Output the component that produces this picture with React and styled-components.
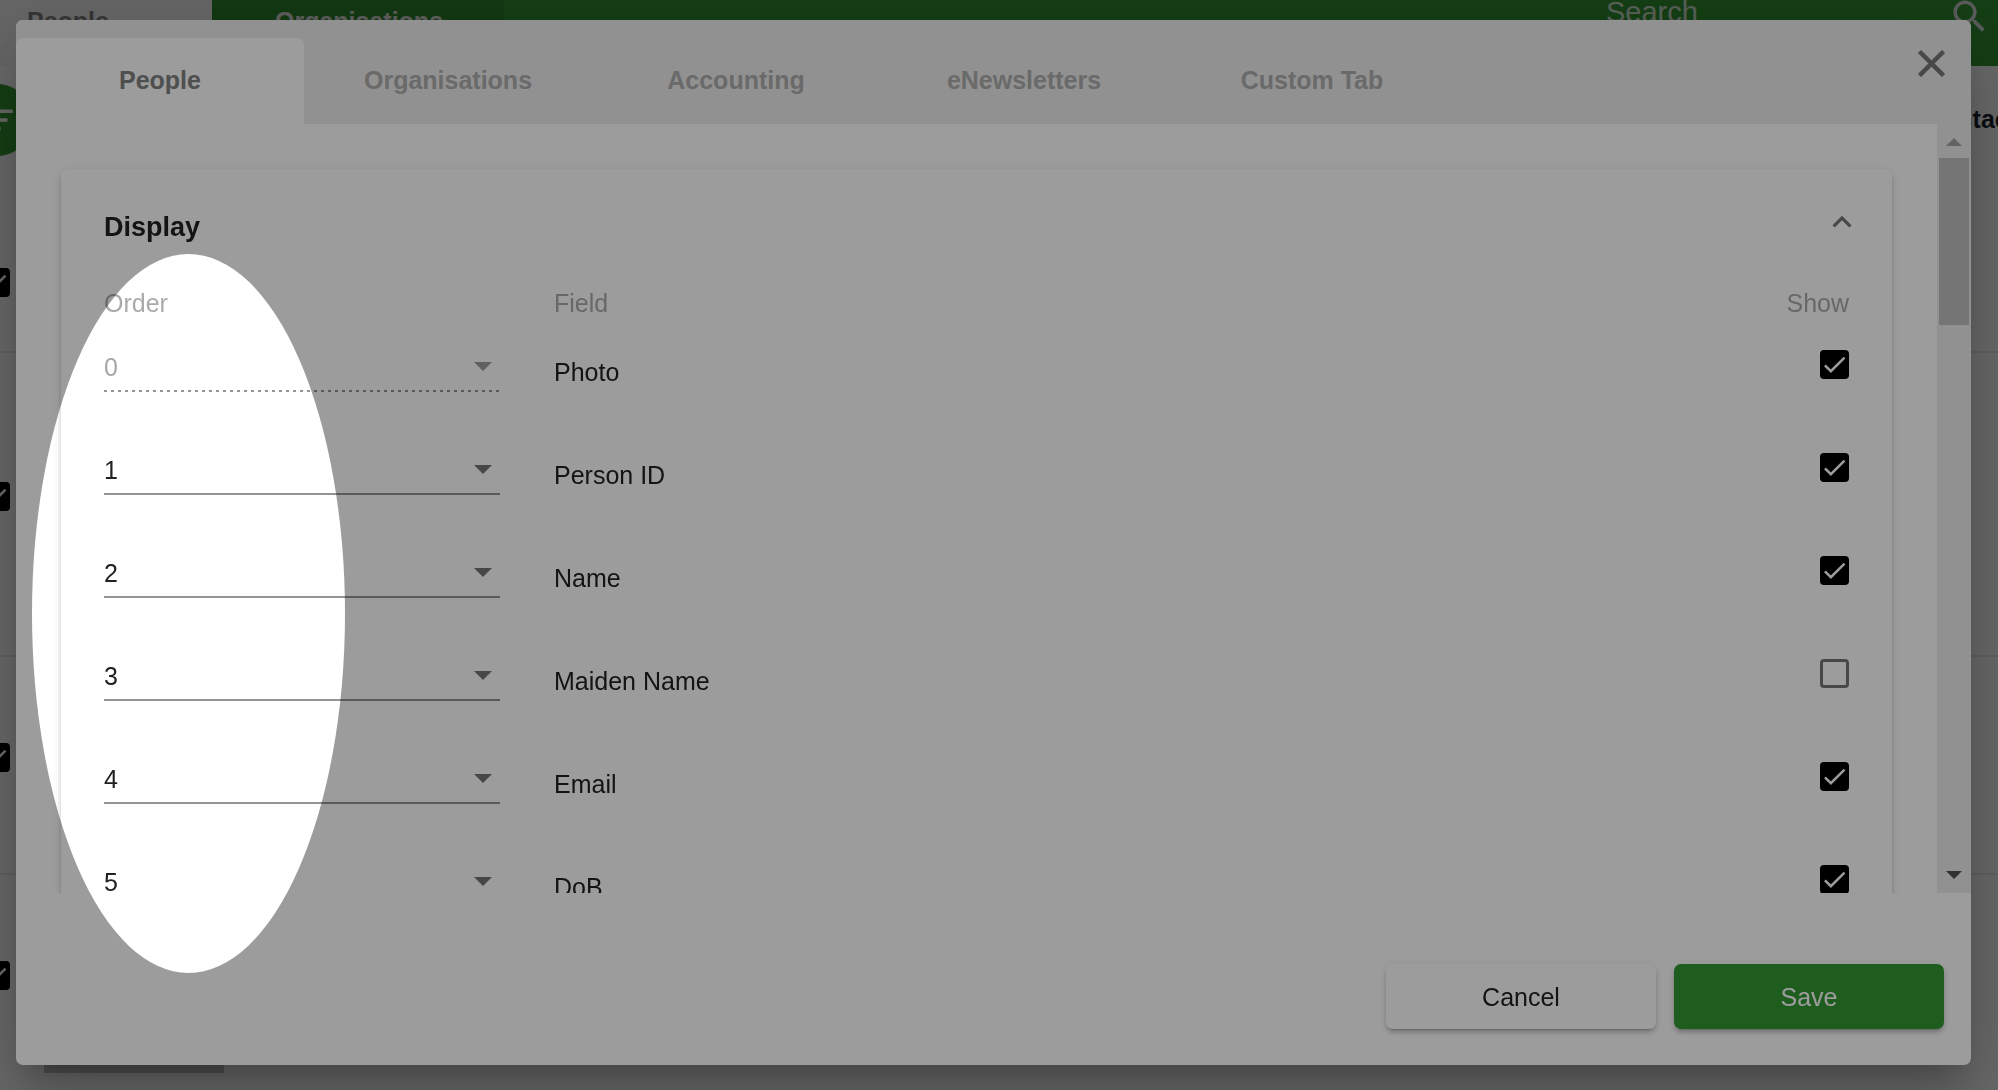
import React, { useState } from 'react';
import styled, { createGlobalStyle } from 'styled-components';

const GlobalStyle = createGlobalStyle`
  * {
    box-sizing: border-box;
  }
  body {
    margin: 0;
    background: #fff;
    color: #212121;
    font-family: "Liberation Sans", Arial, sans-serif;
    font-size: 25px;
    line-height: 30px;
  }
  button, select {
    font: inherit;
    color: inherit;
  }
`;

// ---- page behind the dialog ----

const Page = styled.div`
  height: 100vh;
  overflow: hidden;
`;

const TopBar = styled.header`
  display: flex;
  height: 66px;
  background: #339933;
`;

const TopTab = styled.a`
  width: ${props => props.$first ? '212px' : '292px'};
  padding: 6px 0 0 ${props => props.$first ? '27px' : '2px'};
  text-align: ${props => props.$first ? 'left' : 'center'};
  font-weight: bold;
  text-decoration: none;
  color: ${props => props.$first ? '#828282' : '#e4e4e4'};
  background: ${props => props.$first ? '#f8f8f8' : '#2e8a2e'};
`;

const SearchBox = styled.div`
  display: flex;
  align-items: flex-start;
  margin-left: auto;
  width: 392px;
  height: 38px;
  margin-top: -5px;
`;

const SearchInput = styled.input`
  flex: 1;
  min-width: 0;
  height: 34px;
  padding: 0;
  border: 0;
  background: none;
  font: inherit;
  font-size: 29px;
  color: #fff;
  &::placeholder {
    color: #fff;
    opacity: 0.8;
  }
`;

const SearchIcon = styled.svg`
  flex: none;
  width: 43px;
  height: 43px;
  margin-right: 7px;
  fill: #dcdcdc;
`;

const Toolbar = styled.div`
  display: flex;
  justify-content: space-between;
  align-items: flex-start;
  height: 162px;
  padding-top: 18px;
`;

const FilterButton = styled.button`
  display: grid;
  place-items: center;
  width: 72px;
  height: 72px;
  margin-left: -39px;
  padding: 0;
  border: 0;
  border-radius: 50%;
  background: #339933;
  svg {
    width: 42px;
    height: 42px;
    fill: #fff;
  }
`;

const ColumnTitle = styled.div`
  width: 74px;
  padding-top: 20px;
  font-weight: bold;
  color: #15202b;
  white-space: nowrap;
`;

const PersonRow = styled.div`
  display: flex;
  align-items: center;
  gap: 34px;
  height: ${props => props.$height}px;
  margin-left: -19px;
  border-bottom: 2px solid #ebebeb;
`;

const RowCheck = styled.span`
  padding-bottom: 15px;
`;

const Photo = styled.span`
  width: 180px;
  height: 180px;
  background: #c4c4c4;
`;

// ---- dialog ----

const Backdrop = styled.div`
  position: fixed;
  inset: 0;
  display: flex;
  padding: 20px 27px 25px 16px;
  overflow: hidden;
  background: rgba(0, 0, 0, 0.32);
`;

const Dialog = styled.section`
  flex: 1;
  display: flex;
  flex-direction: column;
  min-width: 0;
  overflow: hidden;
  border-radius: 7px;
  background: #fff;
  box-shadow: 0 20px 27px -13px rgba(0, 0, 0, 0.2),
    0 43px 68px 5px rgba(0, 0, 0, 0.14),
    0 16px 83px 14px rgba(0, 0, 0, 0.12);
`;

const TabStrip = styled.div`
  flex: none;
  display: flex;
  align-items: flex-end;
  height: 104px;
  background: #eee;
`;

const Tab = styled.button`
  width: 288px;
  height: 86px;
  padding: 0 0 2px;
  border: 0;
  border-radius: 8px 8px 0 0;
  font-weight: bold;
  color: ${props => props.$active ? '#828282' : '#adadad'};
  background: ${props => props.$active ? '#fff' : 'transparent'};
`;

const CloseButton = styled.button`
  align-self: flex-start;
  display: flex;
  margin: 21px 17px 0 auto;
  padding: 0;
  border: 0;
  background: none;
  svg {
    width: 45px;
    height: 45px;
    fill: #777;
    stroke: #777;
    stroke-width: 0.5;
  }
`;

const Body = styled.div`
  flex: 1;
  display: flex;
  min-height: 0;
`;

const Content = styled.div`
  flex: 1;
  overflow: hidden;
  padding: 45px;
`;

const Card = styled.div`
  border-radius: 7px;
  background: #fff;
  box-shadow: 0 5px 2px -4px rgba(0, 0, 0, 0.2),
    0 4px 4px 0 rgba(0, 0, 0, 0.14),
    0 2px 9px 0 rgba(0, 0, 0, 0.12);
`;

const CardHeader = styled.button`
  display: flex;
  justify-content: space-between;
  align-items: flex-start;
  width: 100%;
  height: 119px;
  padding: 34px 31px 0 43px;
  border: 0;
  background: none;
  text-align: left;
  svg {
    width: 38px;
    height: 38px;
    fill: #777;
  }
`;

const CardTitle = styled.span`
  padding-top: 8px;
  font-size: 27px;
  line-height: 32px;
  font-weight: bold;
`;

const FieldTable = styled.table`
  width: calc(100% - 86px);
  margin: 0 43px;
  table-layout: fixed;
  border-collapse: collapse;
  th {
    height: 52px;
    padding: 0;
    text-align: left;
    vertical-align: top;
    font-weight: normal;
    color: #aaa;
  }
  td {
    height: 103px;
    padding: 0;
    vertical-align: top;
  }
  th:first-child {
    width: 450px;
  }
  th:last-child {
    width: 100px;
    text-align: right;
  }
`;

const SelectWrap = styled.span`
  display: grid;
  align-items: center;
  width: 396px;
  height: 52px;
  padding-bottom: 2px;
  background: ${props => props.$disabled
    ? 'repeating-linear-gradient(to right, #949494 0 3px, transparent 3px 7px)'
    : 'linear-gradient(#949494, #949494)'} bottom / 100% 2px no-repeat;
  svg {
    grid-area: 1 / 1;
    justify-self: end;
    width: 18px;
    height: 9px;
    margin: 2px 8px 0 0;
    fill: ${props => props.$disabled ? '#9e9e9e' : '#757575'};
    pointer-events: none;
  }
`;

const Select = styled.select`
  grid-area: 1 / 1;
  width: 100%;
  height: 50px;
  padding: 4px 0 0;
  border: 0;
  outline: 0;
  appearance: none;
  background: none;
  &:disabled {
    color: #a6a6a6;
    opacity: 1;
  }
`;

const FieldLabel = styled.label`
  display: block;
  padding-top: 17px;
`;

const ShowCell = styled.div`
  display: flex;
  justify-content: flex-end;
  padding-top: 10px;
`;

const CheckWrap = styled.span`
  display: grid;
  width: 29px;
  height: 29px;
  input {
    grid-area: 1 / 1;
    width: 29px;
    height: 29px;
    margin: 0;
    appearance: none;
    border: 3px solid #777;
    border-radius: 4px;
  }
  input:checked {
    border-color: #000;
    background: #000;
  }
  svg {
    grid-area: 1 / 1;
    width: 29px;
    height: 29px;
    fill: none;
    stroke: #fff;
    stroke-width: 2.13;
    pointer-events: none;
  }
`;

const ScrollTrack = styled.div`
  display: flex;
  flex-direction: column;
  align-items: center;
  width: 34px;
  background: #ededed;
`;

const ScrollArrow = styled.svg`
  flex: none;
  width: 16px;
  height: 8px;
  margin: ${props => props.$down ? 'auto 0 14px' : '14px 0 12px'};
  fill: ${props => props.$down ? '#505050' : '#a3a3a3'};
`;

const ScrollThumb = styled.div`
  width: 30px;
  height: 167px;
  background: #c0c0c0;
`;

const Actions = styled.div`
  flex: none;
  display: flex;
  justify-content: flex-end;
  gap: 18px;
  padding: 71px 27px 36px;
`;

const ActionButton = styled.button`
  width: 270px;
  height: 65px;
  padding: 0;
  border: 0;
  border-radius: 7px;
  color: ${props => props.$primary ? '#fff' : '#212121'};
  background: ${props => props.$primary ? '#339933' : '#fff'};
  box-shadow: 0 5px 2px -4px rgba(0, 0, 0, 0.2),
    0 4px 4px 0 rgba(0, 0, 0, 0.14),
    0 2px 9px 0 rgba(0, 0, 0, 0.12);
`;

// the tour highlight: everything outside the ellipse is dimmed by its shadow
const Spotlight = styled.div`
  position: fixed;
  left: 32px;
  top: 254px;
  width: 313px;
  height: 719px;
  border-radius: 50%;
  box-shadow: 0 0 0 2400px rgba(0, 0, 0, 0.39);
  pointer-events: none;
`;

const tabs = ['People', 'Organisations', 'Accounting', 'eNewsletters', 'Custom Tab'];

const fields = [
  { name: 'Photo', show: true, locked: true },
  { name: 'Person ID', show: true },
  { name: 'Name', show: true },
  { name: 'Maiden Name', show: false },
  { name: 'Email', show: true },
  { name: 'DoB', show: true },
];

const people = [
  { id: 'a', height: 125 },
  { id: 'b', height: 304 },
  { id: 'c', height: 218, photo: true },
  { id: 'd', height: 218, photo: true },
];

function Checkbox(props) {
  return (
    <CheckWrap>
      <input type="checkbox" id={props.id} aria-label={props.label} checked={props.checked} onChange={props.onChange} />
      {props.checked && <svg viewBox="0 0 24 24"><path d="M4.1 12.7L9 17.6 20.3 6.3" /></svg>}
    </CheckWrap>
  );
}

function Background() {
  let [selected, setSelected] = useState(['a', 'b', 'c', 'd']);

  function toggle(id) {
    setSelected(selected.includes(id) ? selected.filter(s => s !== id) : [...selected, id]);
  }

  return (
    <Page>
      <TopBar>
        <TopTab $first href="#people">People</TopTab>
        <TopTab href="#organisations">Organisations</TopTab>
        <SearchBox>
          <SearchInput placeholder="Search" aria-label="Search" />
          <SearchIcon viewBox="0 0 24 24">
            <path d="M15.5 14h-.79l-.28-.27C15.41 12.59 16 11.11 16 9.5 16 5.91 13.09 3 9.5 3S3 5.91 3 9.5 5.91 16 9.5 16c1.61 0 3.09-.59 4.23-1.57l.27.28v.79l5 4.99L20.49 19l-4.99-5zm-6 0C7.01 14 5 11.99 5 9.5S7.01 5 9.5 5 14 7.01 14 9.5 11.99 14 9.5 14z" />
          </SearchIcon>
        </SearchBox>
      </TopBar>
      <Toolbar>
        <FilterButton aria-label="Filter">
          <svg viewBox="0 0 24 24"><path d="M10 18h4v-2h-4v2zM3 6v2h18V6H3zm3 7h12v-2H6v2z" /></svg>
        </FilterButton>
        <ColumnTitle>Contact</ColumnTitle>
      </Toolbar>
      {people.map(p => (
        <PersonRow key={p.id} $height={p.height}>
          <RowCheck>
            <Checkbox label="Select person" checked={selected.includes(p.id)} onChange={() => toggle(p.id)} />
          </RowCheck>
          {p.photo && <Photo />}
        </PersonRow>
      ))}
    </Page>
  );
}

function FieldRow(props) {
  let { field, index } = props;
  return (
    <tr>
      <td>
        <SelectWrap $disabled={field.locked}>
          <Select aria-label={'Order of ' + field.name} defaultValue={index} disabled={field.locked}>
            {fields.map((f, i) => <option key={i} value={i}>{i}</option>)}
          </Select>
          <svg viewBox="0 0 18 9"><path d="M0 0h18L9 9z" /></svg>
        </SelectWrap>
      </td>
      <td><FieldLabel htmlFor={'show-' + index}>{field.name}</FieldLabel></td>
      <td>
        <ShowCell>
          <Checkbox id={'show-' + index} checked={props.checked} onChange={props.onToggle} />
        </ShowCell>
      </td>
    </tr>
  );
}

function App() {
  let [activeTab, setActiveTab] = useState(0);
  let [open, setOpen] = useState(true);
  let [shown, setShown] = useState(fields.map(f => f.show));

  function toggleShown(i) {
    let copy = [...shown];
    copy[i] = !copy[i];
    setShown(copy);
  }

  return (
    <>
      <GlobalStyle />
      <Background />
      <Backdrop>
        <Dialog role="dialog" aria-label="Settings">
          <TabStrip role="tablist">
            {tabs.map((t, i) => (
              <Tab key={t} role="tab" aria-selected={i === activeTab} $active={i === activeTab} onClick={() => setActiveTab(i)}>{t}</Tab>
            ))}
            <CloseButton aria-label="Close">
              <svg viewBox="0 0 24 24"><path d="M19 6.41L17.59 5 12 10.59 6.41 5 5 6.41 10.59 12 5 17.59 6.41 19 12 13.41 17.59 19 19 17.59 13.41 12z" /></svg>
            </CloseButton>
          </TabStrip>
          <Body>
            <Content>
              <Card>
                <CardHeader aria-expanded={open} onClick={() => setOpen(!open)}>
                  <CardTitle>Display</CardTitle>
                  <svg viewBox="0 0 24 24"><path d="M12 8l-6 6 1.41 1.41L12 10.83l4.59 4.58L18 14z" /></svg>
                </CardHeader>
                {open && (
                  <FieldTable>
                    <thead>
                      <tr><th>Order</th><th>Field</th><th>Show</th></tr>
                    </thead>
                    <tbody>
                      {fields.map((f, i) => (
                        <FieldRow key={f.name} field={f} index={i} checked={shown[i]} onToggle={() => toggleShown(i)} />
                      ))}
                    </tbody>
                  </FieldTable>
                )}
              </Card>
            </Content>
            <ScrollTrack>
              <ScrollArrow viewBox="0 0 16 8"><path d="M0 8h16L8 0z" /></ScrollArrow>
              <ScrollThumb />
              <ScrollArrow $down viewBox="0 0 16 8"><path d="M0 0h16L8 8z" /></ScrollArrow>
            </ScrollTrack>
          </Body>
          <Actions>
            <ActionButton>Cancel</ActionButton>
            <ActionButton $primary>Save</ActionButton>
          </Actions>
        </Dialog>
      </Backdrop>
      <Spotlight />
    </>
  );
}

export default App;
